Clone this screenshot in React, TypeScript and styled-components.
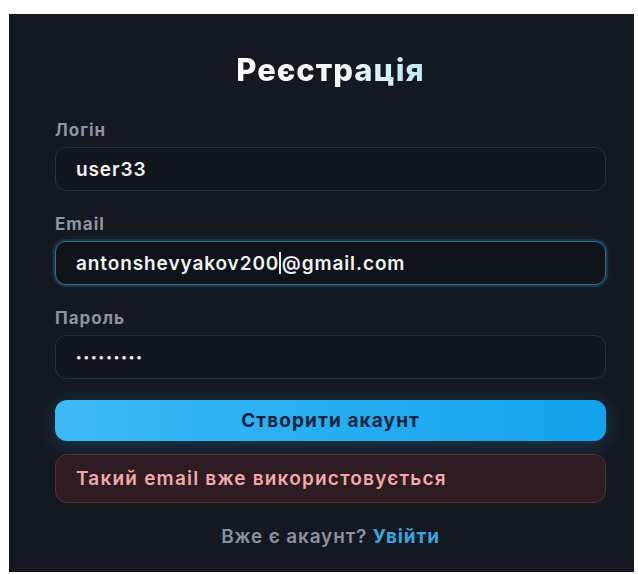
import styled, { createGlobalStyle } from "styled-components";

const GlobalStyle = createGlobalStyle`
  body {
    margin: 0;
    background: #ffffff;
    font-family: "Inter", "Noto Sans", sans-serif;
  }
`;

const Page = styled.div`
  padding: 14px 4px 2px 9px;
`;

const Card = styled.form`
  background: #141821;
  height: 558px;
  box-sizing: border-box;
  padding: 37px 28px 0 46px;
  display: flex;
  flex-direction: column;
`;

const Title = styled.h1`
  margin: 0 0 32px;
  align-self: center;
  color: #eef6fb;
  background: linear-gradient(90deg, #ffffff 0%, #f2f8fb 55%, #bfe6f5 100%);
  -webkit-background-clip: text;
  background-clip: text;
  -webkit-text-fill-color: transparent;
  font-size: 31px;
  line-height: 38px;
  font-weight: 800;
  letter-spacing: 1px;
`;

const Fields = styled.div`
  display: flex;
  flex-direction: column;
  gap: 24px;
`;

const Group = styled.div`
  display: flex;
  flex-direction: column;
  gap: 8px;
`;

const Label = styled.label`
  color: #8d94a1;
  font-size: 17px;
  line-height: 18px;
  font-weight: 700;
  letter-spacing: 1px;
`;

const Field = styled.div<{ $focused?: boolean }>`
  height: 44px;
  box-sizing: border-box;
  border-radius: 11px;
  border: 1px solid ${(p) => (p.$focused ? "#2e7189" : "#2a2f3a")};
  background: ${(p) => (p.$focused ? "#0f131a" : "#12161e")};
  box-shadow: ${(p) =>
    p.$focused
      ? "0 0 0 2px rgba(56, 160, 210, 0.18), 0 0 10px rgba(56, 189, 248, 0.12)"
      : "none"};
  display: flex;
  align-items: center;
  padding: 0 20px;
  color: #f1f3f6;
  font-size: 19px;
  font-weight: 600;
  letter-spacing: 0.9px;
`;

const Caret = styled.span`
  display: inline-block;
  width: 1.5px;
  height: 22px;
  background: #e6e9ee;
  margin: 0 1px 0 0;
`;

const Dots = styled.span`
  font-size: 11px;
  letter-spacing: 2px;
`;

const SubmitButton = styled.button`
  margin-top: 21px;
  height: 41px;
  border: none;
  border-radius: 12px;
  background: linear-gradient(90deg, #3cbaf6, #12a2ec);
  box-shadow: 0 4px 22px rgba(56, 189, 248, 0.22);
  color: #0b2440;
  font-family: inherit;
  font-size: 19px;
  font-weight: 700;
  letter-spacing: 1.1px;
  cursor: pointer;
`;

const ErrorBox = styled.div`
  margin-top: 13px;
  height: 49px;
  box-sizing: border-box;
  border-radius: 12px;
  border: 1px solid #573139;
  background: #2e1c22;
  display: flex;
  align-items: center;
  padding: 0 20px;
  color: #f3a9a9;
  font-size: 19px;
  font-weight: 600;
  letter-spacing: 1.2px;
`;

const Footer = styled.p`
  margin: 23px 0 0;
  text-align: center;
  color: #8a929f;
  font-size: 19px;
  line-height: 22px;
  font-weight: 600;
  letter-spacing: 0.85px;

  a {
    color: #38a6de;
    font-weight: 700;
    text-decoration: none;
  }
`;

export default function App() {
  return (
    <>
      <GlobalStyle />
      <Page>
        <Card onSubmit={(e) => e.preventDefault()}>
          <Title>Реєстрація</Title>
          <Fields>
            <Group>
              <Label>Логін</Label>
              <Field>user33</Field>
            </Group>
            <Group>
              <Label>Email</Label>
              <Field $focused>
                antonshevyakov200
                <Caret />
                @gmail.com
              </Field>
            </Group>
            <Group>
              <Label>Пароль</Label>
              <Field>
                <Dots>•••••••••</Dots>
              </Field>
            </Group>
          </Fields>
          <SubmitButton type="submit">Створити акаунт</SubmitButton>
          <ErrorBox>Такий email вже використовується</ErrorBox>
          <Footer>
            Вже є акаунт? <a href="#">Увійти</a>
          </Footer>
        </Card>
      </Page>
    </>
  );
}
